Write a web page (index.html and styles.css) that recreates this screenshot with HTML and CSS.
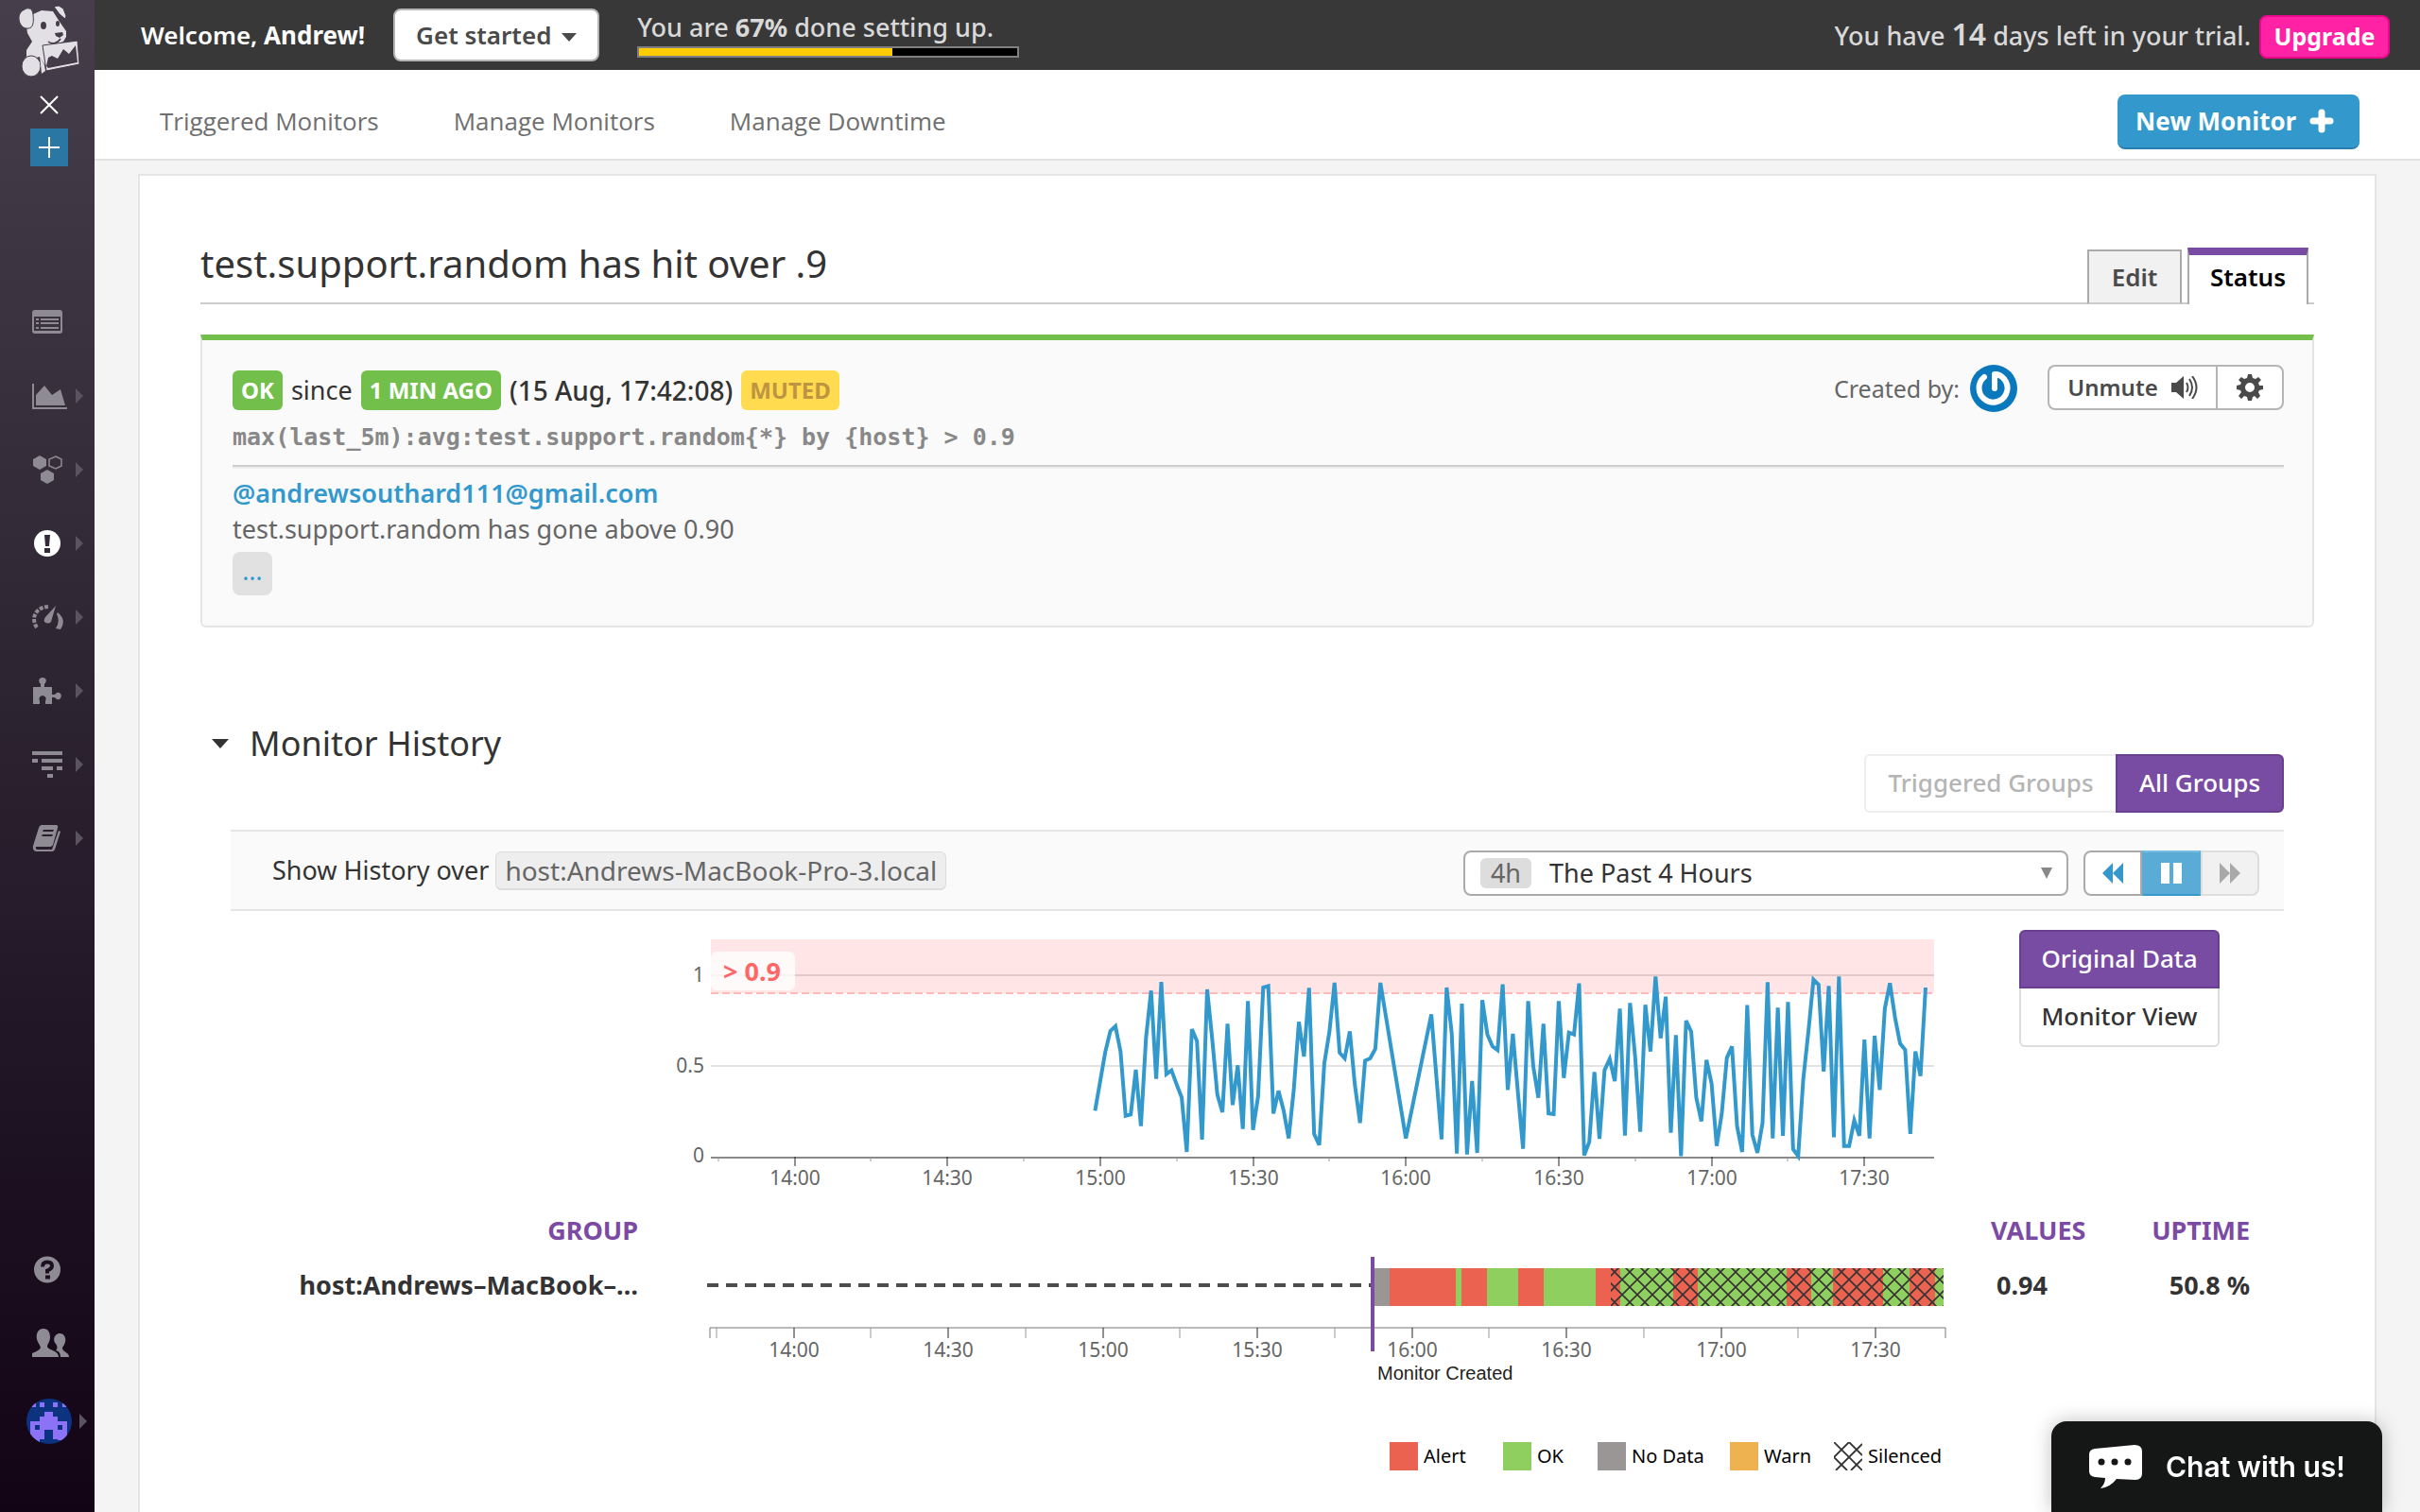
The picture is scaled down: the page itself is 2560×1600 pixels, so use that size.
FILE: index.html
```html
<!DOCTYPE html>
<html lang="en">
<head>
<meta charset="utf-8">
<title>test.support.random has hit over .9</title>
<link rel="stylesheet" href="styles.css">
</head>
<body>
<div class="app">
  <aside class="sidebar">
    <a class="logo" href="#" aria-label="Home">
      <svg width="66" height="76" viewBox="0 0 66 76" fill="#e2e0e4">
        <path d="M15 9 24 5 36 6 43 17 50 27 50 33 47 38 40 41 33 42 36 50 37 62 27 62 22 54 8 58 8 47 14 38 9 29 8 22Z"/>
        <path d="M37 1 42 0 47 3 50 11 49 14 43 9Z" stroke="#443d49" stroke-width="1"/>
        <path d="M6 4C11 1 15 4 15 10C16 17 15 24 10 24C4 25 0 19 0 13C0 9 2 6 6 4Z" stroke="#443d49" stroke-width="1"/>
        <ellipse cx="13" cy="64" rx="10" ry="11" stroke="#443d49" stroke-width="1"/>
        <path d="M22 53 27 63 28 69 24 72Z"/>
        <path d="M25 42 62 37 64 62 29 69Z" stroke="#443d49" stroke-width="1"/>
        <path d="M29 64 31 55 35 53 41 56 47 46 53 51 60 42 62 60 31 66Z" fill="#443d49"/>
        <g fill="#443d49"><ellipse cx="26" cy="21" rx="3" ry="4"/><ellipse cx="41" cy="19" rx="2" ry="3"/><path d="M38 29 46 28 47 31 43 34 39 32Z"/></g>
        <path d="M31 38C35 41 41 40 44 35" fill="none" stroke="#443d49" stroke-width="1.5"/>
      </svg>
    </a>
    <button class="side-close" aria-label="Close"><svg width="20" height="20" viewBox="0 0 20 20" stroke="#fff" stroke-width="2"><path d="M1 1 19 19M19 1 1 19"/></svg></button>
    <button class="side-add" aria-label="Add"><svg width="22" height="22" viewBox="0 0 22 22" stroke="#fff" stroke-width="2"><path d="M11 0V22M0 11H22"/></svg></button>
    <nav class="side-nav">
      <a href="#" aria-label="Events"><svg width="32" height="26" viewBox="0 0 32 26"><path fill-rule="evenodd" d="M3 0H29Q32 0 32 3V22Q32 25 29 25H3Q0 25 0 22V3Q0 0 3 0ZM2 7V22H30V7Z"/><path d="M4 9h3v2H4zM9 9h19v2H9zM4 13h3v2H4zM9 13h19v2H9zM4 18h3v2H4zM9 18h19v2H9z"/></svg></a>
      <a class="more" href="#" aria-label="Dashboards"><svg width="37" height="29" viewBox="0 0 37 29"><path d="M0 1H2V26H37V28H0ZM4 24V13L13 3 21 13 30 7 35 24Z"/></svg></a>
      <a class="more" href="#" aria-label="Infrastructure"><svg width="33" height="30" viewBox="0 0 33 30"><path d="M8 0 15 4V11L8 15 1 11V4ZM16 15 23 19V26L16 30 9 26V19Z"/><path d="M25 1 31 4V11L25 14 18 11V4Z" fill="none" stroke="#8f8b94" stroke-width="1.5"/></svg></a>
      <a class="more current" href="#" aria-label="Monitors"><svg width="28" height="28" viewBox="0 0 28 28"><circle cx="14" cy="14" r="14" fill="#fff"/><path d="M11 5H17L16 17H12ZM11 19H17V24H11Z" fill="#332b38"/></svg></a>
      <a class="more" href="#" aria-label="Metrics"><svg width="33" height="27" viewBox="0 0 33 27"><path d="M5 24C-2 14 4 2 18 2" fill="none" stroke="#8f8b94" stroke-width="4" stroke-dasharray="4 1.5"/><path d="M25 1 20 18Q17 21 13 18 12 16 14 13ZM27 8Q37 16 30 26L25 25Q30 17 26 10Z"/></svg></a>
      <a class="more" href="#" aria-label="Integrations"><svg width="31" height="29" viewBox="0 0 31 29"><path d="M1 10H9V7Q6 4 8 1 11-1 14 1 16 4 13 7V10H21V18H24Q27 14 30 17 32 20 29 23 26 24 24 21H21V28H14V25Q16 20 11 19 6 20 8 25V28H1Z"/></svg></a>
      <a class="more" href="#" aria-label="APM"><svg width="32" height="29" viewBox="0 0 32 29"><path d="M0 0H32V4H0ZM0 8H6V12H0ZM10 8H32V12H10ZM10 16H22V20H10ZM26 16H32V20H26ZM16 24H22V28H16Z"/></svg></a>
      <a class="more" href="#" aria-label="Notebooks"><svg width="31" height="29" viewBox="0 0 31 29"><path fill-rule="evenodd" d="M10 0H25Q28 0 27 3L22 21Q21 23 19 23H4Q3 25 5 26H21L28 6 30 7 24 26Q23 28 21 28H4Q0 27 1 22L7 3Q8 0 10 0ZM12 5 11 7H22L23 5ZM11 10 10 12H21L22 10Z"/></svg></a>
    </nav>
    <nav class="side-nav side-bottom">
      <a href="#" aria-label="Help"><svg width="28" height="29" viewBox="0 0 28 28"><circle cx="14" cy="14" r="14"/><path d="M9 11Q9 6 14 6 19 6 19 10 19 13 14 15V18" fill="none" stroke="#1b0f20" stroke-width="4"/><path d="M12 20h5v4h-5z" fill="#1b0f20"/></svg></a>
      <a href="#" aria-label="Team"><svg width="39" height="31" viewBox="0 0 39 31"><path d="M12 0C17 0 19 4 19 9 19 13 17 15 16 18 15 23 28 22 28 30H0V26Q8 23 9 20 8 17 6 14C3 8 5 0 12 0ZM29 5C34 5 36 10 35 14 34 18 32 19 32 21 33 25 39 25 39 30H30Q30 24 25 23 28 20 25 16C21 12 24 5 29 5Z"/></svg></a>
      <a class="more profile" href="#" aria-label="Account"><svg width="48" height="48" viewBox="0 0 48 48"><defs><clipPath id="face"><circle cx="24" cy="24" r="24"/></clipPath></defs><g clip-path="url(#face)"><path d="M0 0H48V48H0Z" fill="#0b3380"/><path fill="#8b72f7" fill-rule="evenodd" d="M5 4h5v5H5zM14 4h5v5h-5zM28 4h5v5h-5zM38 4h5v5h-5zM19 14h9v5h5v5h10v20H33V43H28V33H19V43H14V46H4V24H14V19H19ZM9 28V33H14V28ZM33 28V33H38V28Z"/></g></svg></a>
    </nav>
  </aside>

  <div class="page">
    <header class="topbar">
      <p class="welcome">Welcome, <b>Andrew!</b></p>
      <button class="btn get-started">Get started <i class="caret"></i></button>
      <div class="setup">
        <span id="setup-label">You are <b>67%</b> done setting up.</span>
        <div class="meter" role="progressbar" aria-labelledby="setup-label" aria-valuenow="67"><i style="width:67%"></i></div>
      </div>
      <p class="trial">You have <b>14</b> days left in your trial.</p>
      <button class="upgrade">Upgrade</button>
    </header>

    <nav class="subnav">
      <a href="#">Triggered Monitors</a>
      <a href="#">Manage Monitors</a>
      <a href="#">Manage Downtime</a>
      <button class="new-monitor">New Monitor <svg width="26" height="26" viewBox="0 0 26 26" stroke="#fff" stroke-width="7" stroke-linecap="round"><path d="M13 4V22M4 13H22"/></svg></button>
    </nav>

    <main class="panel">
      <div class="title-row">
        <h1>test.support.random has hit over .9</h1>
        <div class="tabs"><a class="tab" href="#">Edit</a><a class="tab active" href="#">Status</a></div>
      </div>

      <section class="status">
        <div class="status-row">
          <p class="state"><span class="badge">OK</span> since <span class="badge">1 MIN AGO</span> <time>(15 Aug, 17:42:08)</time> <span class="badge muted">MUTED</span></p>
          <p class="creator">Created by:
            <svg width="50" height="50" viewBox="0 0 50 50"><circle cx="25" cy="25" r="25" fill="#0a78bd"/><path d="M15 13A15 15 0 1 0 28 10" fill="none" stroke="#fff" stroke-width="6" stroke-linecap="round"/><path d="M26 10V25" stroke="#fff" stroke-width="6" stroke-linecap="round"/></svg>
          </p>
          <div class="actions">
            <button class="btn">Unmute <svg width="28" height="24" viewBox="0 0 28 24"><path d="M0 7H5L13 0V24L5 17H0Z" fill="#4a4a4a"/><path d="M16 7Q19 12 16 17M19 3Q25 12 19 21M22 0Q31 12 22 24" fill="none" stroke="#4a4a4a" stroke-width="2"/></svg></button>
            <button class="btn" aria-label="Settings"><svg width="28" height="28" viewBox="0 0 28 28"><path fill="#4a4a4a" fill-rule="evenodd" d="M12 0H16L17 4 20 5 23 3 26 6 23 9 24 12 28 12V16L24 17 23 19 25 23 22 26 19 23 17 24 16 28H12L11 24 8 23 5 26 2 23 5 19 4 17 0 16V12L4 11 5 9 2 6 5 3 8 5 11 4ZM14 9A5 5 0 1 0 14 19A5 5 0 1 0 14 9Z"/></svg></button>
          </div>
        </div>
        <p class="query">max(last_5m):avg:test.support.random{*} by {host} &gt; 0.9</p>
        <hr>
        <a class="mention" href="#">@andrewsouthard111@gmail.com</a>
        <p class="message">test.support.random has gone above 0.90</p>
        <button class="expand">…</button>
      </section>

      <section class="history">
        <div class="history-head">
          <h2><i class="caret"></i>Monitor History</h2>
          <div class="segmented"><button>Triggered Groups</button><button class="on">All Groups</button></div>
        </div>
        <div class="history-body">
          <div class="toolbar">
            <span class="over">Show History over</span>
            <span class="chip">host:Andrews-MacBook-Pro-3.local</span>
            <div class="range">
              <label for="range" class="range-tag">4h</label>
              <select id="range"><option>The Past 4 Hours</option></select>
              <i class="caret"></i>
            </div>
            <div class="playback">
              <button aria-label="Back"><svg width="22" height="22" viewBox="0 0 22 22" fill="#3598cc"><path d="M0 11 11 0V22ZM11 11 22 0V22Z"/></svg></button>
              <button class="on" aria-label="Pause"><svg width="22" height="22" viewBox="0 0 22 22" fill="#fff"><path d="M0 0h9v22H0zM13 0h9v22h-9z"/></svg></button>
              <button disabled aria-label="Forward"><svg width="22" height="22" viewBox="0 0 22 22" fill="#a9a9a9"><path d="M0 0 11 11 0 22ZM11 0 22 11 11 22Z"/></svg></button>
            </div>
          </div>

          <div class="chart-row">
            <svg class="plot" viewBox="700 964 1360 310">
              <path d="M752 994H2046V1051H752Z" fill="#ffe5e5"/>
              <path d="M752 1032H2046" stroke="#dfc9c9" stroke-width="2"/>
              <path d="M752 1128H2046" stroke="#e3e3e3" stroke-width="2"/>
              <path d="M752 1051H2046" stroke="#ffb8b8" stroke-width="2" stroke-dasharray="8 4"/>
              <rect x="752" y="1007" width="89" height="41" rx="6" fill="#fff" opacity=".8"/>
              <text class="limit" x="765" y="1038">&gt; 0.9</text>
              <path d="M752 1225H2046" stroke="#8a8a8a" stroke-width="2"/>
              <path d="M760 1225v4M921 1225v4M1083 1225v4M1245 1225v4M1406 1225v4M1568 1225v4M1730 1225v4M1891 1225v4" stroke="#999" stroke-width="1"/>
              <path d="M841 1224v10M1002 1224v10M1164 1224v10M1326 1224v10M1487 1224v10M1649 1224v10M1811 1224v10M1972 1224v10" stroke="#222" stroke-width="1"/>
              <polyline transform="translate(1163.8 960) scale(5.39 .33333)" vector-effect="non-scaling-stroke" fill="none" stroke="#3399cc" stroke-width="4" points="-1,646 0,553 1,460 2,393 3,378 4,458 5,662 6,658 7,516 8,695 9,415 10,265 11,545 12,237 13,530 14,518 15,562 16,604 17,777 18,387 19,425 20,738 21,261 22,420 23,595 24,651 25,370 26,628 27,502 28,704 29,298 30,707 31,600 32,255 33,250 34,655 35,583 36,645 37,734 38,580 39,364 40,474 41,256 42,720 43,755 44,495 45,395 46,240 47,462 48,480 49,394 50,565 51,685 52,487 53,480 54,450 55,240 60,734 65,340 66,540 67,737 68,255 69,400 70,782 71,306 72,785 73,552 74,780 75,295 76,404 77,442 78,454 79,245 80,580 81,402 82,590 83,767 84,298 85,505 86,605 87,370 88,655 89,657 90,298 91,542 92,398 93,404 94,242 95,788 96,745 97,523 98,735 99,517 100,482 101,552 102,322 103,725 104,304 105,475 106,713 107,310 108,458 109,220 110,416 111,284 112,716 113,406 114,790 115,360 116,395 117,605 118,680 119,485 120,560 121,758 122,655 123,478 124,442 125,695 126,777 127,311 128,722 129,780 130,685 131,238 132,734 133,319 134,726 135,301 136,768 137,790 138,545 139,395 140,230 141,246 142,522 143,250 144,730 145,220 146,758 147,758 148,677 149,726 150,420 151,734 152,408 153,580 154,322 155,241 156,350 157,433 158,453 159,720 160,458 161,536 162,255"/>
              <g class="axis" text-anchor="end"><text x="745" y="1039">1</text><text x="745" y="1135">0.5</text><text x="745" y="1230">0</text></g>
              <g class="axis" text-anchor="middle"><text x="841" y="1254">14:00</text><text x="1002" y="1254">14:30</text><text x="1164" y="1254">15:00</text><text x="1326" y="1254">15:30</text><text x="1487" y="1254">16:00</text><text x="1649" y="1254">16:30</text><text x="1811" y="1254">17:00</text><text x="1972" y="1254">17:30</text></g>
            </svg>
            <div class="views"><button class="on">Original Data</button><button>Monitor View</button></div>
          </div>

          <table class="groups">
            <colgroup><col class="c-group"><col><col class="c-value"><col class="c-uptime"></colgroup>
            <thead><tr><th class="group">GROUP</th><th></th><th class="value">VALUES</th><th class="uptime">UPTIME</th></tr></thead>
            <tbody><tr>
              <td class="group">host:Andrews–MacBook–…</td>
              <td class="timeline">
                <svg class="plot" viewBox="700 1320 1360 150">
                  <defs><pattern id="hatch" width="16" height="16" x="1708" y="1346" patternUnits="userSpaceOnUse"><path d="M-2-2 18 18M18-2-2 18" stroke="#333" stroke-width="1.6"/></pattern></defs>
                  <path d="M748 1360H1450" stroke="#4d4d4d" stroke-width="4" stroke-dasharray="12 8"/>
                  <path d="M1453 1342H1470V1382H1453Z" fill="#9b9696"/>
                  <path d="M1470 1342H2047V1382H1470Z" fill="#eb6250"/>
                  <path d="M1540 1342h6v40h-6zM1573 1342h33v40h-33zM1633 1342h55v40h-55zM1714 1342h56v40h-56zM1796 1342h94v40h-94zM1916 1342h23v40h-23zM1992 1342h28v40h-28zM2047 1342h9v40h-9z" fill="#8fcf5f"/>
                  <path d="M1704 1342H2056V1382H1704Z" fill="url(#hatch)"/>
                  <path d="M751 1416V1405H2058V1416" fill="none" stroke="#777" stroke-width="1"/>
                  <path d="M758 1405v11M921 1405v11M1085 1405v11M1248 1405v11M1412 1405v11M1575 1405v11M1739 1405v11M1902 1405v11" stroke="#999" stroke-width="1"/>
                  <path d="M840 1405v11M1003 1405v11M1167 1405v11M1330 1405v11M1494 1405v11M1657 1405v11M1821 1405v11M1984 1405v11" stroke="#222" stroke-width="1"/>
                  <path d="M1452 1330V1430" stroke="#7a4ba3" stroke-width="4"/>
                  <g class="axis" text-anchor="middle"><text x="840" y="1436">14:00</text><text x="1003" y="1436">14:30</text><text x="1167" y="1436">15:00</text><text x="1330" y="1436">15:30</text><text x="1494" y="1436">16:00</text><text x="1657" y="1436">16:30</text><text x="1821" y="1436">17:00</text><text x="1984" y="1436">17:30</text></g>
                  <text class="created" x="1457" y="1460">Monitor Created</text>
                </svg>
              </td>
              <td class="value">0.94</td>
              <td class="uptime">50.8 %</td>
            </tr></tbody>
          </table>

          <ul class="legend">
            <li><i class="alert"></i>Alert</li>
            <li><i class="ok"></i>OK</li>
            <li><i class="nodata"></i>No Data</li>
            <li><i class="warn"></i>Warn</li>
            <li><svg width="30" height="30" viewBox="0 0 30 30"><path d="M0 0 30 30M16 0 30 14M0 16 14 30M16 0 0 16M30 2 2 30M30 18 18 30" stroke="#333" stroke-width="1.8"/></svg>Silenced</li>
          </ul>
        </div>
      </section>
    </main>
  </div>
</div>

<button class="chat">
  <svg width="56" height="46" viewBox="0 0 56 46"><path fill="#fff" d="M6 4 48 0Q56 0 56 7V30Q56 37 49 37L29 36Q22 45 12 46 17 41 17 35L6 34Q0 33 0 28V10Q0 5 6 4Z"/><g fill="#151716"><circle cx="13" cy="18" r="3.5"/><circle cx="27" cy="18" r="3.5"/><circle cx="41" cy="18" r="3.5"/></g></svg>
  Chat with us!
</button>
</body>
</html>
```
FILE: styles.css
```css
* { box-sizing: border-box; }
body, h1, h2, p, ul { margin: 0; padding: 0; font-weight: 400; }
body { font: 27px/36px "Noto Sans", "Open Sans", sans-serif; color: #333; background: #f4f4f4; }
a { text-decoration: none; color: inherit; }
button, select { font: inherit; color: inherit; margin: 0; padding: 0; border: 0; background: none; cursor: pointer; }
svg { display: block; flex: none; }
b { font-weight: 700; }

.app { display: flex; min-height: 100vh; }
.page { flex: 1; min-width: 0; display: flex; flex-direction: column; }

/* sidebar */
.sidebar { width: 100px; flex: none; display: flex; flex-direction: column; background: linear-gradient(#463f4b, #322a37 36%, #1f1424 72%, #130415); padding-bottom: 52px; }
.logo { padding: 6px 0 0 20px; height: 101px; }
.side-close { margin-left: 42px; width: 20px; height: 35px; display: flex; }
.side-add { margin-left: 32px; width: 40px; height: 40px; background: #2b77a4; display: flex; align-items: center; justify-content: center; }
.side-nav { margin-top: 126px; fill: #8f8b94; }
.side-nav a { display: flex; align-items: center; height: 78px; padding: 0 12px 0 34px; }
.side-nav .more::after { content: ""; margin-left: auto; border: solid transparent; border-width: 8px 0 8px 8px; border-left-color: #5a5460; }
.side-nav a:has(circle) { padding-left: 36px; }
.side-bottom { margin-top: auto; }
.side-nav a.profile { height: 88px; padding: 0 8px 0 28px; }

/* header */
.topbar { height: 74px; background: #383838; color: #d9d9d9; display: flex; align-items: center; padding: 0 32px 0 49px; }
.welcome { color: #fff; font-weight: 600; font-size: 26px; }
.caret { display: inline-block; border: solid transparent; border-width: 9px 8px 0; border-top-color: currentColor; }
.btn { background: #fff; border: 2px solid #b5b5b5; border-radius: 8px; color: #4a4a4a; font-weight: 600; font-size: 26px; }
.get-started { margin-left: 30px; width: 218px; height: 56px; }
.get-started .caret { margin-left: 4px; vertical-align: 3px; }
.setup { margin-left: 40px; width: 404px; font-weight: 500; }
.setup span { display: block; line-height: 32px; }
.meter { height: 12px; margin-top: 4px; border: 2px solid #808080; background: #000; }
.meter i { display: block; height: 100%; background: #ffcc00; }
.trial { margin-left: auto; font-weight: 500; }
.trial b { font-size: 32px; font-weight: 600; }
.upgrade { margin: 4px 0 0 9px; padding-bottom: 2px; width: 138px; height: 46px; border: 2px solid #e8088c; border-radius: 8px; background: #ff22a4; color: #fff; font-weight: 700; font-size: 25px; }

.subnav { background: #fff; border-bottom: 2px solid #e2e2e2; height: 96px; display: flex; align-items: center; gap: 79px; padding: 14px 64px 0 69px; color: #6f6f6f; font-family: "Open Sans", sans-serif; font-size: 26px; }
.new-monitor { margin: 2px 0 0 auto; width: 256px; height: 58px; display: flex; align-items: center; gap: 14px; padding-left: 19px; border-radius: 8px; background: #3399cc; border-bottom: 2px solid #2a7fb0; color: #fff; font-weight: 700; }

/* panel */
.panel { flex: 1; margin: 14px 46px 0; background: #fff; border: solid #e5e5e5; border-width: 2px 2px 0; padding: 0 64px 24px; }
.title-row { display: flex; justify-content: space-between; height: 136px; padding-top: 73px; border-bottom: 2px solid #ccc; }
h1 { font-size: 40px; line-height: 40px; }
.tabs { display: flex; align-items: flex-end; gap: 6px; padding-right: 6px; margin-bottom: -2px; }
.tab { width: 100px; height: 58px; border: 2px solid #aaa; border-bottom-color: #ccc; background: #f1f1f1; text-align: center; line-height: 54px; font-size: 26px; font-weight: 600; color: #4a4a4a; }
.tab.active { width: 128px; height: 60px; background: #fff; border-top: 8px solid #784ca3; border-bottom: 0; line-height: 46px; color: #000; }

.status { margin-top: 32px; border: 2px solid #e5e5e5; border-top: 6px solid #73bf4c; border-radius: 0 0 6px 6px; background: #fafafa; padding: 26px 30px 32px 32px; }
.status-row { display: flex; align-items: center; height: 50px; }
.state { display: flex; align-items: center; gap: 9px; padding-top: 4px; }
.state time { font-size: 28px; font-weight: 500; }
.badge { background: #73bf4c; color: #fff; border-radius: 6px; line-height: 42px; padding: 0 9px; font-size: 24px; font-weight: 700; }
.badge.muted { background: #ffdb4f; color: #bf9440; }
.creator { margin-left: auto; display: flex; align-items: center; gap: 11px; color: #666; font-size: 25px; }
.actions { display: flex; margin-left: 32px; }
.actions .btn { height: 48px; width: 72px; display: flex; align-items: center; justify-content: center; gap: 14px; margin-bottom: 2px; font-size: 24px; }
.actions .btn:first-child { width: 178px; border-right: 0; border-radius: 8px 0 0 8px; }
.actions .btn:last-child { border-radius: 0 8px 8px 0; }
.query { font: 700 25px/36px "DejaVu Sans Mono", monospace; color: #888; margin-top: 9px; }
hr { margin: 11px 0 7px; height: 4px; border: 0; border-top: 2px solid #ccc; background: #eee; }
.mention { display: block; line-height: 38px; font-weight: 600; color: #3399cc; }
.message { line-height: 38px; color: #666; }
.expand { display: block; width: 42px; height: 46px; margin-top: 5px; padding-bottom: 6px; border-radius: 8px; background: #e1e1e1; color: #3399cc; }

/* history */
.history { margin-top: 98px; }
.history-head { display: flex; justify-content: space-between; height: 98px; padding: 0 32px 0 12px; }
h2 { align-self: flex-start; font-size: 36px; line-height: 50px; display: flex; align-items: center; gap: 22px; }
h2 .caret { border-width: 10px 9px 0; }
.segmented { display: flex; align-self: flex-end; }
.segmented button, .views button { height: 62px; padding-bottom: 2px; font-size: 26px; font-weight: 500; }
.segmented button { width: 266px; border: 2px solid #eee; border-right: 0; border-radius: 6px 0 0 6px; color: #b5b5b5; }
.segmented .on { width: 178px; border-radius: 0 6px 6px 0; }
.segmented .on, .views .on { background: #784ca3; border: 2px solid #69408f; color: #fff; }
.history-body { margin-top: 18px; padding: 0 32px; }
.toolbar { display: flex; align-items: center; height: 86px; padding: 0 26px 0 44px; background: #fafafa; border: solid #e5e5e5; border-width: 2px 0; }
.chip { margin-left: 7px; line-height: 38px; padding: 0 9px; border: solid #ddd; border-width: 1px 1px 2px; border-radius: 6px; background: #eee; color: #666; font-size: 28px; }
.range { margin: 6px 0 0 auto; width: 640px; height: 48px; display: flex; align-items: center; background: #fff; border: 2px solid #aaa; border-radius: 8px; padding: 0 15px 0 16px; }
.range-tag { width: 54px; line-height: 32px; border-radius: 6px; background: #ddd; text-align: center; color: #666; }
.range select { flex: 1; margin-left: 19px; appearance: none; outline: 0; }
.range .caret { border-width: 12px 6px 0; color: #888; }
.playback { display: flex; margin: 6px 0 0 16px; }
.playback button { width: 62px; height: 48px; display: flex; align-items: center; justify-content: center; background: #fff; border: 2px solid #aaa; }
.playback button:first-child { border-radius: 8px 0 0 8px; }
.playback .on { background: #5aabd6; border-color: #79bee0 #5aabd6 #3399cc; }
.playback button:disabled { background: #f1f1f1; border-color: #ddd; border-radius: 0 8px 8px 0; }

.chart-row { display: grid; grid-template-columns: 1fr 356px; padding-left: 456px; }
.plot { width: 100%; }
.axis { font-size: 21px; font-weight: 400; fill: #666; }
.limit { font-size: 27px; font-weight: 700; fill: #ff6666; }
.created { font: 20px "Liberation Sans", sans-serif; fill: #222; }
.views { width: 212px; margin: 20px 0 0 76px; display: flex; flex-direction: column; }
.views button { border: 2px solid #ddd; border-top: 0; border-radius: 0 0 6px 6px; }
.views .on { border-radius: 6px 6px 0 0; }

.groups { width: 100%; table-layout: fixed; border-collapse: collapse; }
.groups th, .groups td { padding: 10px 0 0; vertical-align: top; font-weight: 700; }
.groups th { color: #7b4aa3; }
.groups td { padding-top: 22px; }
.groups td.timeline { padding: 0; }
.c-group { width: 456px; }
.c-value { width: 148px; }
.c-uptime { width: 208px; }
.groups .group { text-align: right; padding-right: 25px; }
.groups .value { text-align: left; padding-left: 46px; }
.groups td.value { padding-left: 52px; }
.groups .uptime { text-align: right; padding-right: 36px; }

.legend { list-style: none; display: grid; grid-template-columns: 120px 100px 140px 110px 115px; justify-content: end; margin: 56px 361px 0 0; font-size: 20px; line-height: 30px; color: #000; }
.legend li { display: flex; gap: 6px; white-space: nowrap; }
.legend i { width: 30px; height: 30px; }
.alert { background: #eb6250; }
.ok { background: #8fcf5f; }
.nodata { background: #9b9696; }
.warn { background: #eeb350; }

.chat { position: fixed; right: 40px; bottom: 0; width: 350px; height: 96px; display: flex; align-items: center; gap: 25px; padding-left: 40px; border-radius: 16px 16px 0 0; background: #151716; color: #fff; font: 600 30px/36px Inter, sans-serif; box-shadow: 0 0 20px rgba(0,0,0,.25); }
```
